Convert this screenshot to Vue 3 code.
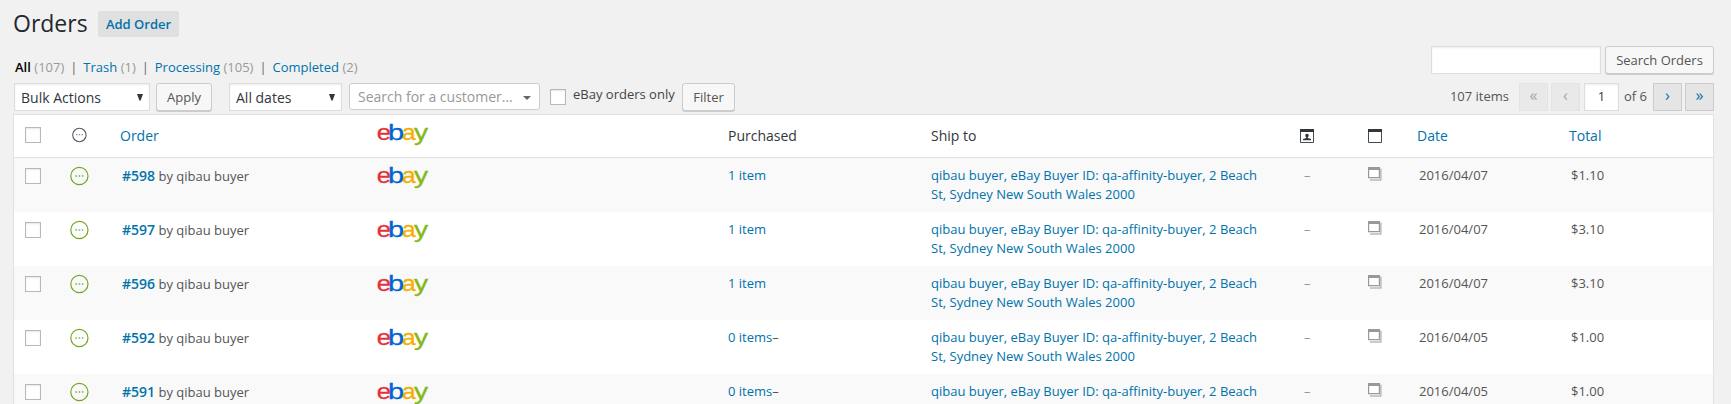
<script setup>
const views = [
  { label: 'All', count: 107, current: true },
  { label: 'Trash', count: 1 },
  { label: 'Processing', count: 105 },
  { label: 'Completed', count: 2 },
]
const logo = [
  { ch: 'e', color: '#e53238', x: -1.3, sx: 1.17 },
  { ch: 'b', color: '#0064d2', x: 10.1, sx: 1.32 },
  { ch: 'a', color: '#f5af02', x: 24, sx: 1.12 },
  { ch: 'y', color: '#86b817', x: 36, sx: 1.28 },
]
const address = 'qibau buyer, eBay Buyer ID: qa-affinity-buyer, 2 Beach St, Sydney New South Wales 2000'
const orders = [
  { id: 598, items: '1 item', date: '2016/04/07', total: '$1.10' },
  { id: 597, items: '1 item', date: '2016/04/07', total: '$3.10' },
  { id: 596, items: '1 item', date: '2016/04/07', total: '$3.10' },
  { id: 592, items: '0 items', none: true, date: '2016/04/05', total: '$1.00' },
  { id: 591, items: '0 items', none: true, date: '2016/04/05', total: '$1.00' },
]
</script>

<template>
  <div class="page">
    <header class="heading">
      <h1>Orders</h1>
      <a class="add">Add Order</a>
    </header>

    <div class="subbar">
      <nav class="views">
        <template v-for="(v, i) in views" :key="v.label">
          <span v-if="i" class="sep">|</span>
          <a :class="{ current: v.current }">{{ v.label }}</a><span class="count">({{ v.count }})</span>
        </template>
      </nav>
      <div class="search">
        <input type="text" class="field" />
        <button class="button">Search Orders</button>
      </div>
    </div>

    <div class="tablenav">
      <div class="select bulk">Bulk Actions<svg width="6" height="7"><path d="M0 0h6L3.6 6.5H2.4z" /></svg></div>
      <button class="button apply">Apply</button>
      <div class="select dates">All dates<svg width="6" height="7"><path d="M0 0h6L3.6 6.5H2.4z" /></svg></div>
      <div class="customer">Search for a customer…<svg width="8" height="4"><path d="M0 0h8L4 4z" /></svg></div>
      <span class="box only-box"></span>
      <span class="only">eBay orders only</span>
      <button class="button filter">Filter</button>
      <div class="pages">
        <span class="total-items">107 items</span>
        <span class="page-btn off">«</span>
        <span class="page-btn off">‹</span>
        <span class="field page-no">1</span>
        <span class="of">of 6</span>
        <span class="page-btn">›</span>
        <span class="page-btn">»</span>
      </div>
    </div>

    <div class="table">
      <div class="row head">
        <span class="box"></span>
        <svg class="status" width="20" height="20" viewBox="0 0 20 20">
          <circle cx="10.4" cy="10" r="6.7" fill="none" stroke="#555d66" stroke-width="1.1" />
          <path d="M7 9.6h1.4M9.8 9.6h1.4M12.6 9.6H14" stroke="#8a8f94" stroke-width="1.2" />
        </svg>
        <a class="order">Order</a>
        <svg class="ebay" width="52" height="26" viewBox="0 0 52 26">
          <text v-for="l in logo" :key="l.ch" :fill="l.color" :stroke="l.color" :transform="`translate(${l.x} 18) scale(${l.sx} 1)`">{{ l.ch }}</text>
        </svg>
        <span>Purchased</span>
        <span>Ship to</span>
        <svg class="note" width="14" height="14" viewBox="0 0 14 14">
          <path d="M.5 .5h13v13H.5z" fill="#fff" stroke="#444b52" />
          <path d="M0 0h14v3H0z" fill="#32373c" />
          <path d="M5.3 5.7Q7 4 8.7 5.7V7.2L7.8 8.3V9L11 10v1.2H3V10l3.2-1v-.7L5.3 7.2z" fill="#32373c" />
        </svg>
        <svg class="note" width="14" height="14" viewBox="0 0 14 14">
          <path d="M.5 .5h13v13H.5z" fill="#fff" stroke="#444b52" />
          <path d="M0 0h14v3H0z" fill="#32373c" />
        </svg>
        <a class="date">Date</a>
        <a class="total">Total</a>
      </div>

      <div v-for="o in orders" :key="o.id" class="row item">
        <span class="box"></span>
        <svg class="status" width="20" height="20" viewBox="0 0 20 20">
          <circle cx="10.4" cy="10" r="8.6" fill="none" stroke="#73a724" stroke-width="1.2" />
          <path d="M6.4 10H8M9.6 10h1.6M12.8 10h1.6" stroke="#86b14a" stroke-width="1.3" />
        </svg>
        <span class="order"><a class="number">#{{ o.id }}</a> by qibau buyer</span>
        <svg class="ebay" width="52" height="26" viewBox="0 0 52 26">
          <text v-for="l in logo" :key="l.ch" :fill="l.color" :stroke="l.color" :transform="`translate(${l.x} 18) scale(${l.sx} 1)`">{{ l.ch }}</text>
        </svg>
        <span><a>{{ o.items }}</a><template v-if="o.none">–</template></span>
        <a class="ship">{{ address }}</a>
        <span class="dash">–</span>
        <svg class="note" width="14" height="14" viewBox="0 0 14 14">
          <path d="M12.9 1.5v11.4H2" fill="none" stroke="#bbb" stroke-width="1.5" />
          <path d="M.6 .5h10.8v10.2H.6z" fill="#fff" stroke="#999" stroke-width="1.2" />
          <path d="M0 0h12v3H0z" fill="#999" />
        </svg>
        <span class="date">{{ o.date }}</span>
        <span class="total">{{ o.total }}</span>
      </div>
    </div>
  </div>
</template>

<style>
body { background: #f1f1f1; overflow: hidden; }
</style>

<style scoped>
* { box-sizing: border-box; }
.page {
  width: 1731px; height: 404px; overflow: hidden; padding: 0 17px 0 13px;
  font: 13px/19px "Open Sans", "Noto Sans", sans-serif; color: #555; background: #f1f1f1; white-space: nowrap;
}
a { color: #0073aa; }
.heading { display: flex; height: 46px; padding-top: 11px; }
h1 { width: 85px; margin: 0; font-size: 23px; line-height: 25px; font-weight: 400; color: #23282d; }
.add { width: 81px; height: 26px; background: #e0e0e0; border-radius: 2px; font-weight: 600; line-height: 26px; text-align: center; }
.subbar { display: flex; justify-content: space-between; height: 37px; }
.views { display: flex; padding: 12px 0 0 2px; line-height: 19px; }
.views .current { color: #000; font-weight: 600; }
.count { margin-left: 3.5px; color: #999; }
.sep { margin: 0 7px 0 6px; width: 6px; text-align: center; color: #666; }
.search { display: flex; gap: 4px; }
.field { height: 28px; border: 1px solid #ddd; background: #fff; box-shadow: inset 0 1px 2px rgba(0,0,0,.07); padding: 0; outline: none; }
.search .field { width: 170px; }
.search .button { width: 109px; }
.button {
  height: 28px; padding: 0; border: 1px solid #ccc; border-radius: 3px; background: #f7f7f7; color: #555;
  box-shadow: 0 1px 0 #ccc; font: 13px/26px "Open Sans", sans-serif; text-align: center;
}
.tablenav { display: flex; height: 31px; padding-left: 1px; align-items: flex-start; }
.select {
  display: flex; justify-content: space-between; height: 28px; border: 1px solid #ddd; background: #fff;
  box-shadow: inset 0 1px 2px rgba(0,0,0,.07); padding: 0 6px; font-size: 14px; line-height: 27px; color: #32373c;
}
.select svg { margin-top: 10px; fill: #32373c; }
.bulk { width: 136px; }
.apply { width: 56px; margin-left: 6px; }
.dates { width: 113px; margin-left: 17px; }
.customer {
  display: flex; justify-content: space-between; width: 191px; height: 27px; margin-left: 7px; padding: 0 8px;
  border: 1px solid #ccc; border-radius: 3px; background: #fff; color: #999; font-size: 14px; line-height: 25px;
}
.customer svg { margin-top: 12px; fill: #666; }
.box { width: 16px; height: 16px; border: 1px solid #b4b9be; background: #fff; box-shadow: inset 0 1px 2px rgba(0,0,0,.1); }
.only-box { margin: 6px 0 0 10px; }
.only { width: 109px; margin-left: 7px; line-height: 23px; color: #444; }
.filter { width: 53px; }
.pages { display: flex; margin-left: auto; line-height: 27px; }
.total-items { margin-right: 10px; }
.page-btn { width: 29px; height: 28px; margin-left: 3px; border: 1px solid #ccc; background: #e5e5e5; color: #0073aa; font-size: 16px; line-height: 23px; text-align: center; }
.total-items + .page-btn { margin-left: 0; }
.page-btn.off { border-color: #e3e3e3; background: #e9e9e9; color: #a0a5aa; }
.page-no { width: 35px; margin-left: 4px; color: #32373c; text-align: center; line-height: 25px; }
.of { width: 31px; margin-left: 5px; }
.of + .page-btn { margin-left: -2px; }
.table { border: 1px solid #e1e1e1; background: #fff; height: 320px; }
.row {
  display: grid; grid-template-columns: 44px 51px 258px 350px 203px 356px 68px 62px 152px 1fr;
  align-items: start; padding-left: 11px;
}
.head { height: 43px; border-bottom: 1px solid #e1e1e1; color: #32373c; font-size: 14px; line-height: 19px; padding-top: 11px; }
.head .box { margin-top: 1px; }
.head .status { margin-top: -1px; }
.head .ebay { margin-top: -4px; }
.head .note { margin: 3px 0 0 13px; }
.item { height: 54px; padding-top: 8px; }
.item:nth-child(even) { background: #f9f9f9; }
.item .box { margin-top: 2px; }
.item .order { padding-left: 2px; }
.number { font-size: 14px; font-weight: 600; }
.item .ebay { margin-top: -1px; }
.ebay { font-family: "Liberation Sans", Arial, sans-serif; font-size: 22px; stroke-width: .3; overflow: visible; }
.ship { width: 335px; white-space: normal; }
.dash { padding-left: 17px; color: #999; }
.item .note { margin: 1px 0 0 13px; }
.item .date, .item .total { padding-left: 2px; }
.order, .date, .total { display: block; }
</style>
